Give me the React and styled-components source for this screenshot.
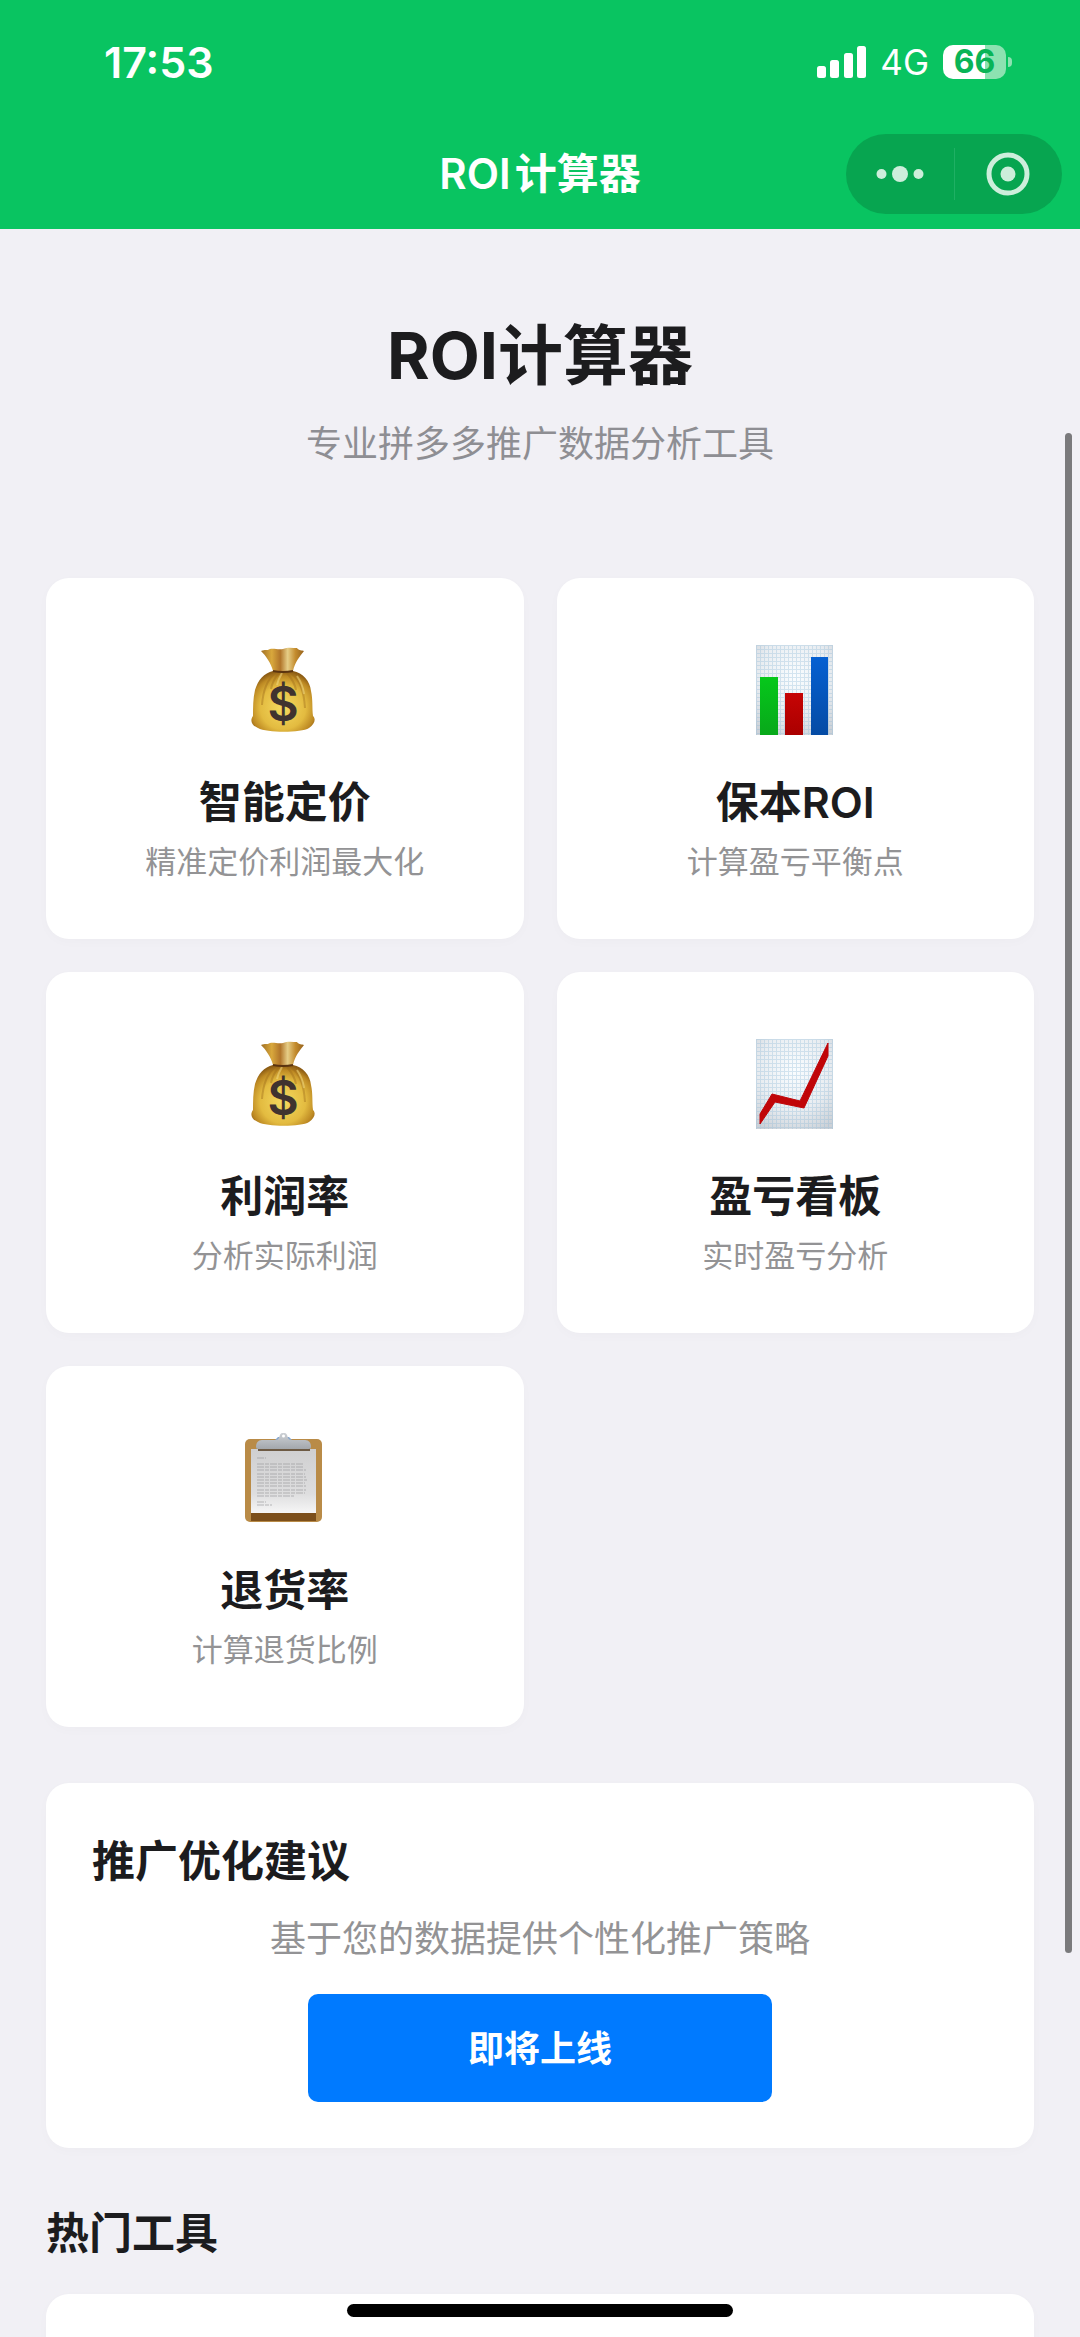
import React from "react";
import styled, { createGlobalStyle } from "styled-components";

const GlobalStyle = createGlobalStyle`
  * {
    box-sizing: border-box;
  }
  body {
    margin: 0;
    background: #f1f0f5;
    color: #1c1c1e;
    font-family: Inter, "Noto Sans CJK SC", sans-serif;
  }
  h1, h2, p {
    margin: 0;
  }
`;

// 首页工具列表
const tools = [
  { id: "pricing", icon: "bag", title: "智能定价", desc: "精准定价利润最大化" },
  { id: "break-even", icon: "bars", title: "保本ROI", desc: "计算盈亏平衡点" },
  { id: "profit", icon: "bag", title: "利润率", desc: "分析实际利润" },
  { id: "board", icon: "trend", title: "盈亏看板", desc: "实时盈亏分析" },
  { id: "refund", icon: "clipboard", title: "退货率", desc: "计算退货比例" },
];

function MoneyBag() {
  return (
    <StIcon viewBox="0 0 90 90" aria-hidden="true">
      <defs>
        <radialGradient id="bagBody" cx="50%" cy="60%" r="60%">
          <stop offset="0" stopColor="#f5da60" />
          <stop offset="0.6" stopColor="#e3bb40" />
          <stop offset="0.86" stopColor="#bd8923" />
          <stop offset="1" stopColor="#8c5c14" />
        </radialGradient>
        <linearGradient id="bagNeck" x1="0" x2="1">
          <stop offset="0" stopColor="#a06f24" />
          <stop offset="0.25" stopColor="#d9a83c" />
          <stop offset="0.45" stopColor="#b1752a" />
          <stop offset="0.62" stopColor="#e6cd86" />
          <stop offset="0.8" stopColor="#c48c2e" />
          <stop offset="1" stopColor="#96621c" />
        </linearGradient>
      </defs>
      <path d="M21 6 C25 4 27 6 30 4 C34 3 38 5 43 4 C47 2 53 3 57 3 C59 6 62 5 64 6 C60 11 55 17 53 26 L33 26 C31 18 26 11 21 6Z" fill="url(#bagNeck)" />
      <path d="M33 26 L53 26 C63 28 70 36 71 46 C73 55 72 63 73 71 C76 74 75 79 69 83 C61 88 27 88 18 83 C11 80 10 75 13 71 C13 62 13 54 15 45 C18 35 24 28 33 26Z" fill="url(#bagBody)" />
      <path d="M35 28 C27 35 23 46 22 60 M39 28 C34 34 32 38 31 44 M47 28 C53 35 55 39 56 45 M51 28 C61 36 64 48 65 63" fill="none" stroke="#9b6a18" strokeWidth="2" opacity="0.4" />
      <path d="M42 28 C39 33 38 35 37 40 M57 31 C62 38 63 42 64 49" fill="none" stroke="#f6e08a" strokeWidth="2" opacity="0.5" />
      <path d="M33 26 Q43 28 53 26" fill="none" stroke="#5b3410" strokeWidth="2" />
      <text x="43" y="76" textAnchor="middle" fontFamily="Inter, sans-serif" fontSize="48" fontWeight="600" fill="#40332f">$</text>
    </StIcon>
  );
}

// 图表类图标共用的方格纸
function GridPaper({ id }) {
  return (
    <>
      <defs>
        <radialGradient id={`${id}Paper`} cx="50%" cy="35%" r="75%">
          <stop offset="0" stopColor="#fafdff" />
          <stop offset="0.6" stopColor="#e9edf1" />
          <stop offset="1" stopColor="#ccd1d7" />
        </radialGradient>
        <pattern id={`${id}Grid`} x="6" width="4" height="4" patternUnits="userSpaceOnUse">
          <path d="M0 0.5 H4 M0.5 0 V4" stroke="#8fb9d6" strokeWidth="1" opacity="0.35" />
        </pattern>
      </defs>
      <rect x="6" width="77" height="90" fill={`url(#${id}Paper)`} />
      <rect x="6" width="77" height="90" fill={`url(#${id}Grid)`} />
    </>
  );
}

function BarChart() {
  return (
    <StIcon viewBox="0 0 90 90" aria-hidden="true">
      <GridPaper id="bars" />
      <defs>
        <linearGradient id="barGreen" x1="0" x2="0" y1="0" y2="1">
          <stop offset="0" stopColor="#06c81b" />
          <stop offset="1" stopColor="#08a81a" />
        </linearGradient>
        <linearGradient id="barRed" x1="0" x2="0" y1="0" y2="1">
          <stop offset="0" stopColor="#c60404" />
          <stop offset="1" stopColor="#aa0000" />
        </linearGradient>
        <linearGradient id="barBlue" x1="0" x2="0" y1="0" y2="1">
          <stop offset="0" stopColor="#0560d2" />
          <stop offset="1" stopColor="#054ba4" />
        </linearGradient>
      </defs>
      <rect x="10" y="32" width="18" height="58" fill="url(#barGreen)" />
      <rect x="35" y="48" width="18" height="42" fill="url(#barRed)" />
      <rect x="61" y="12" width="17" height="78" fill="url(#barBlue)" />
    </StIcon>
  );
}

function TrendChart() {
  return (
    <StIcon viewBox="0 0 90 90" aria-hidden="true">
      <GridPaper id="trend" />
      <path d="M10 75 L22 55 L50 62 L78 4 V17 L54 69 L25 63 L10 85Z" fill="#c00508" stroke="#c00508" strokeWidth="1" />
    </StIcon>
  );
}

function Clipboard() {
  return (
    <StIcon viewBox="0 0 90 90" aria-hidden="true">
      <defs>
        <linearGradient id="sheet" x1="0" x2="0" y1="0" y2="1">
          <stop offset="0" stopColor="#cfcfd0" />
          <stop offset="0.7" stopColor="#dededf" />
          <stop offset="1" stopColor="#f6f6f6" />
        </linearGradient>
        <linearGradient id="clip" x1="0" x2="0" y1="0" y2="1">
          <stop offset="0" stopColor="#cdd1d6" />
          <stop offset="1" stopColor="#a3a7ac" />
        </linearGradient>
      </defs>
      <rect x="5" y="6" width="77" height="83" rx="5" fill="#b98b47" />
      <rect x="11" y="80" width="65" height="8" fill="#7c4f1b" />
      <rect x="11" y="16" width="65" height="64" fill="url(#sheet)" />
      <path d="M18 15 H70 V18 H18Z" fill="#6d5a44" />
      <path d="M34 8 L38 4 H49 L53 8Z" fill="#86a6cc" />
      <path d="M16 14 C16 10 18 7 22 7 H36 C39 7 39 4 40 2 C41 -1 46 -1 47 2 C48 4 48 7 51 7 H65 C69 7 71 10 71 14 Q71 16 69 16 H18 Q16 16 16 14Z" fill="url(#clip)" />
      <circle cx="43.500" cy="3" r="1.500" fill="#fff" />
      <path d="M17 25 H26 M17 31 H63 M17 34 H64 M17 37 H66 M17 41 H65 M17 44 H66 M17 47 H67 M17 50 H65 M17 53 H66 M17 57 H66 M17 60 H65 M17 63 H54 M17 69 H26 M17 72 H32" stroke="#929295" strokeWidth="1" strokeDasharray="7 1 4 1" opacity="0.6" />
    </StIcon>
  );
}

const icons = {
  bag: MoneyBag,
  bars: BarChart,
  trend: TrendChart,
  clipboard: Clipboard,
};

function StatusBar() {
  return (
    <StStatusBar>
      <StTime>17:53</StTime>
      <StSignals>
        <svg width="49" height="32" viewBox="0 0 49 32" fill="#fff" aria-hidden="true">
          <rect y="20" width="9" height="12" rx="2.500" />
          <rect x="13" y="14" width="9" height="18" rx="2.500" />
          <rect x="27" y="7" width="9" height="25" rx="2.500" />
          <rect x="40" width="9" height="32" rx="2.500" />
        </svg>
        <StNetwork>4G</StNetwork>
        <StBattery>66</StBattery>
      </StSignals>
    </StStatusBar>
  );
}

function NavBar() {
  return (
    <StNavBar>
      <StNavTitle>
        <span>ROI</span>
        <span>计算器</span>
      </StNavTitle>
      <StCapsule>
        <StCapsuleButton type="button" aria-label="更多">
          <svg width="48" height="16" viewBox="0 0 48 16" fill="currentColor">
            <circle cx="5.500" cy="8" r="5" />
            <circle cx="24" cy="8" r="8" />
            <circle cx="42.500" cy="8" r="5" />
          </svg>
        </StCapsuleButton>
        <StCapsuleButton type="button" aria-label="关闭">
          <svg width="44" height="44" viewBox="0 0 44 44">
            <circle cx="22" cy="22" r="19" fill="none" stroke="currentColor" strokeWidth="5" />
            <circle cx="22" cy="22" r="7.500" fill="currentColor" />
          </svg>
        </StCapsuleButton>
      </StCapsule>
    </StNavBar>
  );
}

function ToolCard({ tool }) {
  const Icon = icons[tool.icon];
  return (
    <StToolCard href={`#${tool.id}`}>
      <Icon />
      <StTitle>{tool.title}</StTitle>
      <StToolDesc>{tool.desc}</StToolDesc>
    </StToolCard>
  );
}

function App() {
  return (
    <StScreen>
      <GlobalStyle />
      <StHeader>
        <StatusBar />
        <NavBar />
      </StHeader>
      <StBody>
        <StScroller>
          <StHero>
            <StHeroTitle>ROI计算器</StHeroTitle>
            <StHeroDesc>专业拼多多推广数据分析工具</StHeroDesc>
          </StHero>
          <StToolGrid>
            {tools.map((tool) => (
              <ToolCard key={tool.id} tool={tool} />
            ))}
          </StToolGrid>
          <StSuggestion>
            <StTitle>推广优化建议</StTitle>
            <StSuggestionDesc>基于您的数据提供个性化推广策略</StSuggestionDesc>
            <StButton type="button">即将上线</StButton>
          </StSuggestion>
          <StHot>
            <StTitle>热门工具</StTitle>
            <StHotList />
          </StHot>
        </StScroller>
        <StScrollThumb />
      </StBody>
      <StHomeIndicator />
    </StScreen>
  );
}

const StScreen = styled.div`
  position: relative;
  display: flex;
  flex-direction: column;
  height: 100vh;
  overflow: hidden;
`;

const StHeader = styled.header`
  flex: none;
  background: #09c461;
  color: #fff;
`;

const StStatusBar = styled.div`
  display: flex;
  align-items: center;
  justify-content: space-between;
  height: 119px;
  padding: 4px 74px 0 104px;
`;

const StTime = styled.span`
  font-size: 43px;
  font-weight: 600;
  line-height: 52px;
`;

const StSignals = styled.div`
  display: flex;
  align-items: center;
  gap: 14px;
`;

const StNetwork = styled.span`
  font-size: 35px;
  line-height: 44px;
`;

const StBattery = styled.span`
  position: relative;
  width: 63px;
  height: 34px;
  border-radius: 10px;
  background: linear-gradient(90deg, #fff 66%, #8ce2b1 66%);
  color: #09b457;
  font-size: 32px;
  font-weight: 700;
  line-height: 34px;
  text-align: center;

  &::after {
    content: "";
    position: absolute;
    top: 12px;
    right: -6px;
    width: 4px;
    height: 10px;
    border-radius: 0 4px 4px 0;
    background: #8ce2b1;
  }
`;

const StNavBar = styled.nav`
  display: grid;
  grid-template-columns: 1fr auto 1fr;
  align-items: center;
  height: 110px;
  padding: 0 18px;
`;

const StNavTitle = styled.div`
  display: flex;
  grid-column: 2;
  gap: 4px;
  font-size: 42px;
  font-weight: 600;
  line-height: 60px;
`;

const StCapsule = styled.div`
  display: flex;
  justify-self: end;
  width: 216px;
  height: 80px;
  border-radius: 40px;
  background: #07a550;
`;

const StCapsuleButton = styled.button`
  position: relative;
  display: flex;
  flex: 1;
  align-items: center;
  justify-content: center;
  padding: 0;
  border: 0;
  background: none;
  color: #cdeedb;

  & + &::before {
    content: "";
    position: absolute;
    left: 0;
    width: 1px;
    height: 52px;
    background: #1fb064;
  }
`;

const StBody = styled.div`
  position: relative;
  flex: 1;
  min-height: 0;
`;

const StScroller = styled.main`
  height: 100%;
  padding: 82px 46px 0;
  overflow-y: auto;
  scrollbar-width: none;
`;

const StHero = styled.div`
  text-align: center;
`;

const StHeroTitle = styled.h1`
  font-size: 65px;
  font-weight: 700;
  line-height: 90px;
`;

const StHeroDesc = styled.p`
  margin-top: 18px;
  color: #8e8e93;
  font-size: 36px;
  line-height: 50px;
`;

const StToolGrid = styled.section`
  display: grid;
  grid-template-columns: 1fr 1fr;
  gap: 33px;
  margin-top: 109px;
`;

const StCard = styled.section`
  border-radius: 23px;
  background: #fff;
  box-shadow: 0 3px 12px rgba(0, 0, 0, 0.02);
`;

const StToolCard = styled(StCard).attrs({ as: "a" })`
  display: flex;
  flex-direction: column;
  align-items: center;
  padding: 67px 24px 55px;
  color: inherit;
  text-decoration: none;
`;

const StIcon = styled.svg`
  width: 90px;
  height: 90px;
  margin-bottom: 37px;
`;

const StTitle = styled.h2`
  font-size: 43px;
  font-weight: 600;
  line-height: 60px;
`;

const StToolDesc = styled.p`
  margin-top: 8px;
  color: #939395;
  font-size: 31px;
  line-height: 44px;
`;

const StSuggestion = styled(StCard)`
  margin-top: 56px;
  padding: 48px 46px 46px;
`;

const StSuggestionDesc = styled.p`
  margin-top: 23px;
  color: #939395;
  font-size: 36px;
  line-height: 50px;
  text-align: center;
`;

const StButton = styled.button`
  display: block;
  min-width: 464px;
  height: 108px;
  margin: 30px auto 0;
  padding: 0 36px 4px;
  border: 0;
  border-radius: 10px;
  background: #007aff;
  color: #fff;
  font-family: inherit;
  font-size: 36px;
  font-weight: 700;
`;

const StHot = styled.section`
  margin-top: 55px;
`;

const StHotList = styled(StCard)`
  min-height: 180px;
  margin-top: 31px;
`;

const StScrollThumb = styled.div`
  position: absolute;
  top: 9.7%;
  right: 8px;
  width: 7px;
  height: 72.1%;
  border-radius: 4px;
  background: #7a7a7c;
`;

const StHomeIndicator = styled.div`
  position: absolute;
  bottom: 20px;
  left: 50%;
  width: 386px;
  height: 13px;
  border-radius: 7px;
  background: #000;
  transform: translateX(-50%);
`;

export default App;
